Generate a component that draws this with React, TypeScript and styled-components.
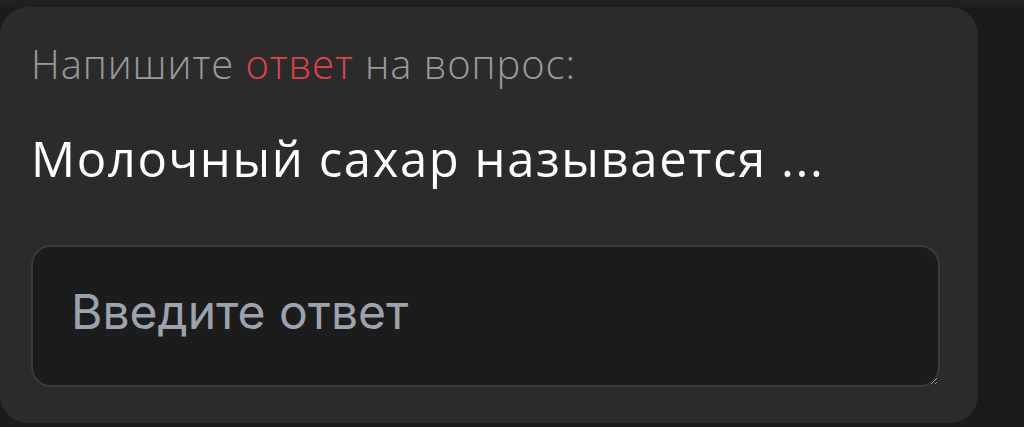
import React from 'react';
import styled, { createGlobalStyle } from 'styled-components';

const GlobalStyle = createGlobalStyle`
  html, body {
    margin: 0;
    padding: 0;
    background: #1b1b1b;
  }
  #root {
    min-height: 427px;
  }
`;

const Page = styled.div`
  width: 1024px;
  height: 427px;
  display: flex;
  flex-direction: column;
  background: #1b1b1b;
  overflow: hidden;
`;

const TopStrip = styled.div`
  height: 7px;
  background: #202020;
  flex-shrink: 0;
`;

const Card = styled.div`
  width: 978px;
  height: 416px;
  box-sizing: border-box;
  background: #2b2b2b;
  border-radius: 28px;
  padding: 33px 38px 0 31px;
  display: flex;
  flex-direction: column;
`;

const Prompt = styled.p`
  margin: 0;
  font-family: 'Open Sans', sans-serif;
  font-weight: 300;
  font-size: 40px;
  letter-spacing: 0.9px;
  line-height: 48px;
  color: #9a9a9a;
`;

const Accent = styled.span`
  color: #e2444c;
`;

const Question = styled.h2`
  margin: 41px 0 0;
  font-family: 'Open Sans', sans-serif;
  font-weight: 400;
  font-size: 49px;
  letter-spacing: 1.6px;
  line-height: 58px;
  color: #ffffff;
`;

const AnswerInput = styled.textarea`
  margin-top: 58px;
  width: 909px;
  height: 142px;
  box-sizing: border-box;
  background: #1c1c1c;
  border: 2px solid #3a3a3a;
  border-radius: 20px;
  padding: 36px 38px 20px;
  font-family: Inter, sans-serif;
  font-size: 48px;
  line-height: 58px;
  color: #ffffff;
  outline: none;
  resize: vertical;

  &::placeholder {
    color: #9ca3af;
  }
`;

export default function App() {
  return (
    <Page>
      <GlobalStyle />
      <TopStrip />
      <Card>
        <Prompt>
          Напишите <Accent>ответ</Accent> на вопрос:
        </Prompt>
        <Question>Молочный сахар называется ...</Question>
        <AnswerInput placeholder="Введите ответ" />
      </Card>
    </Page>
  );
}
